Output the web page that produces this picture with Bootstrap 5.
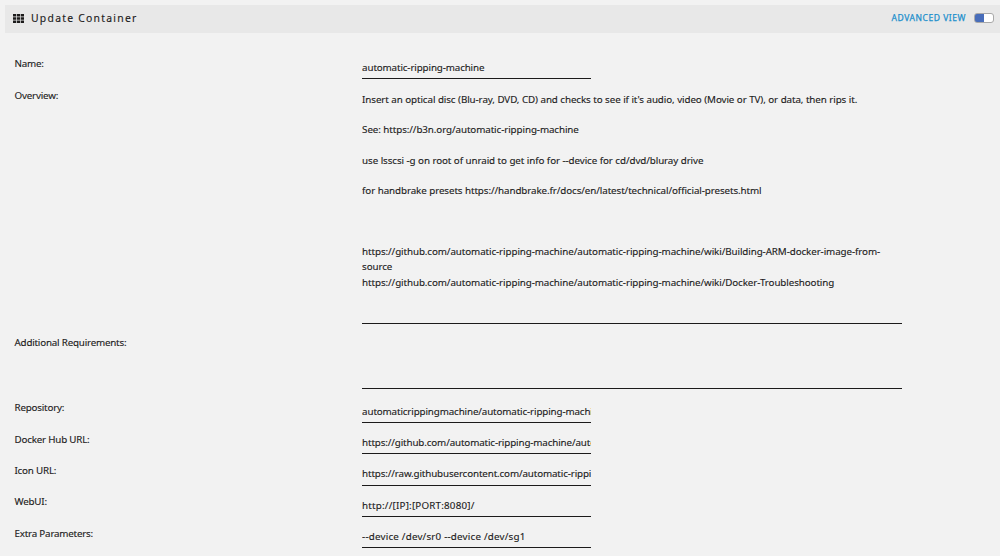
<!DOCTYPE html>
<html lang="en">
  <head>
    <meta charset="UTF-8" />
    <meta name="viewport" content="width=device-width, initial-scale=1" />
    <title>Update Container</title>
    <link
      href="https://cdn.jsdelivr.net/npm/bootstrap@5.3.0/dist/css/bootstrap.min.css"
      rel="stylesheet"
    />
    <script src="https://cdn.jsdelivr.net/npm/bootstrap@5.3.0/dist/js/bootstrap.bundle.min.js"></script>
    <style>
      body {
        height: 556px;
        background-color: #f2f2f2;
        color: #1c1b1b;
        font-family: "Noto Sans", sans-serif;
        font-size: 9.8px;
        line-height: 15.25px;
        -webkit-text-stroke: 0.12px;
      }
      .title-bar {
        height: 28px;
        margin: 5px 0 0 5px;
        padding: 0 6px 2px 8px;
        background-color: #e8e8e8;
      }
      .title-text {
        margin-left: 7px;
        padding-top: 1px;
        font-size: 10.4px;
        letter-spacing: 1.25px;
      }
      .view-switch {
        color: #1b8fcc;
        font-size: 8.5px;
        letter-spacing: 0.55px;
        -webkit-text-stroke: 0.25px;
      }
      .switch-track {
        width: 20px;
        height: 10px;
        border: 1px solid #a9a9a9;
        border-radius: 3px;
        background: linear-gradient(90deg, #486dba 50%, #fff 50%);
      }
      .settings {
        padding: 23px 0 0 14.5px;
      }
      .setting {
        height: 31.3px;
      }
      .setting-overview {
        height: 247.9px;
      }
      .setting-extra {
        height: 65px;
      }
      .setting-label {
        width: 347.6px;
        padding-top: 0.3px;
        letter-spacing: -0.2px;
      }
      .setting .form-control {
        width: 229px;
        height: 19px;
        min-height: 0;
        margin-top: 4px;
        padding: 0 0 3.7px;
        border: 0;
        border-bottom: 1px solid #1c1b1b;
        border-radius: 0;
        background: transparent;
        color: inherit;
        font-size: inherit;
        line-height: inherit;
        letter-spacing: -0.13px;
      }
      .setting textarea.form-control {
        width: 540px;
        height: 233px;
        padding-top: 0.3px;
        letter-spacing: -0.09px;
        word-spacing: 0.1px;
        resize: none;
        overflow: hidden;
      }
      .setting-extra textarea.form-control {
        height: 50px;
      }
      .setting .wide-value {
        letter-spacing: 0.2px;
      }
    </style>
  </head>
  <body class="overflow-hidden">
    <div class="title-bar d-flex justify-content-between align-items-center">
      <div class="d-flex align-items-center">
        <svg width="11" height="9" viewBox="0 0 11 9" fill="#1c1b1b">
          <path d="M0 0h3.2v2.5H0zM3.9 0h3.2v2.5H3.9zM7.8 0H11v2.5H7.8zM0 3.25h3.2v2.5H0zM3.9 3.25h3.2v2.5H3.9zM7.8 3.25H11v2.5H7.8zM0 6.5h3.2V9H0zM3.9 6.5h3.2V9H3.9zM7.8 6.5H11V9H7.8z" />
        </svg>
        <span class="title-text">Update Container</span>
      </div>
      <div class="view-switch d-flex align-items-center gap-2">
        <span>ADVANCED VIEW</span>
        <span class="switch-track"></span>
      </div>
    </div>

    <form class="settings">
      <div class="setting d-flex">
        <label for="name" class="setting-label">Name:</label>
        <input type="text" class="form-control" id="name" value="automatic-ripping-machine" />
      </div>
      <div class="setting setting-overview d-flex">
        <label for="overview" class="setting-label">Overview:</label>
        <textarea class="form-control" id="overview" spellcheck="false">
Insert an optical disc (Blu-ray, DVD, CD) and checks to see if it's audio, video (Movie or TV), or data, then rips it.

See: https://b3n.org/automatic-ripping-machine

use lsscsi -g on root of unraid to get info for --device for cd/dvd/bluray drive

for handbrake presets https://handbrake.fr/docs/en/latest/technical/official-presets.html



https://github.com/automatic-ripping-machine/automatic-ripping-machine/wiki/Building-ARM-docker-image-from-
source
https://github.com/automatic-ripping-machine/automatic-ripping-machine/wiki/Docker-Troubleshooting</textarea>
      </div>
      <div class="setting setting-extra d-flex">
        <label for="requirements" class="setting-label">Additional Requirements:</label>
        <textarea class="form-control" id="requirements"></textarea>
      </div>
      <div class="setting d-flex">
        <label for="repository" class="setting-label">Repository:</label>
        <input type="text" class="form-control" id="repository" value="automaticrippingmachine/automatic-ripping-machine:latest" />
      </div>
      <div class="setting d-flex">
        <label for="hubUrl" class="setting-label">Docker Hub URL:</label>
        <input type="text" class="form-control" id="hubUrl" value="https://github.com/automatic-ripping-machine/automatic-ripping-machine" />
      </div>
      <div class="setting d-flex">
        <label for="iconUrl" class="setting-label">Icon URL:</label>
        <input type="text" class="form-control" id="iconUrl" value="https://raw.githubusercontent.com/automatic-ripping-machine/docker" />
      </div>
      <div class="setting d-flex">
        <label for="webui" class="setting-label">WebUI:</label>
        <input type="text" class="form-control wide-value" id="webui" value="http://[IP]:[PORT:8080]/" />
      </div>
      <div class="setting d-flex">
        <label for="extraParams" class="setting-label">Extra Parameters:</label>
        <input type="text" class="form-control wide-value" id="extraParams" value="--device /dev/sr0 --device /dev/sg1" />
      </div>
    </form>
  </body>
</html>
